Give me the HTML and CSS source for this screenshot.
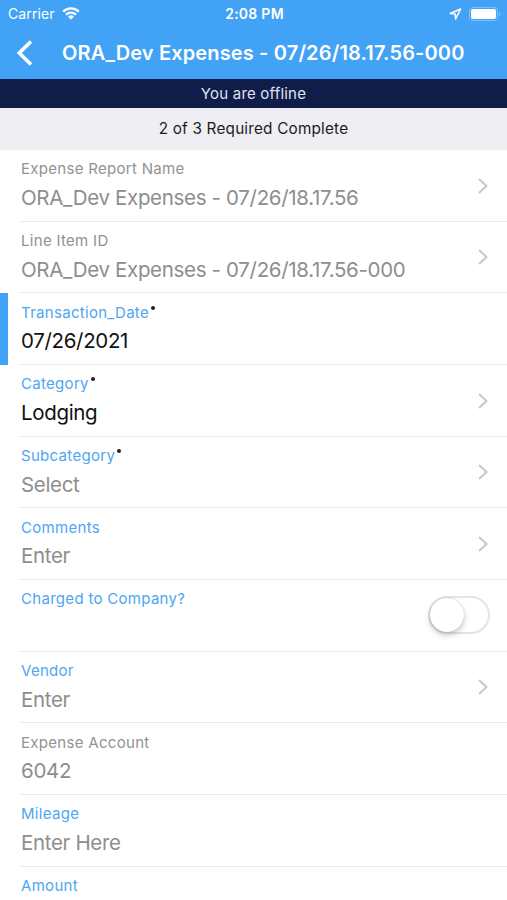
FILE: index.html
```html
<!DOCTYPE html>
<html lang="en">
<head>
<meta charset="utf-8">
<title>Expense</title>
<link rel="stylesheet" href="styles.css">
</head>
<body>
<svg class="sprite" aria-hidden="true"><symbol id="chev" viewBox="0 0 12 18"><path d="M2 2l7.500 7L2 16" fill="none" stroke="currentColor" stroke-width="2"/></symbol></svg>
<div class="screen">
  <header class="top">
    <div class="status">
      <div class="carrier"><span>Carrier</span>
        <svg class="wifi" viewBox="0 0 18 13"><g fill="none" stroke="#fff" stroke-width="2.2"><path d="M1.2 4.6a11 11 0 0 1 15.600 0"/><path d="M4 7.700a7 7 0 0 1 10 0"/></g><path d="M9 12.600L6 9.700a4.300 4.300 0 0 1 6 0z" fill="#fff"/></svg>
      </div>
      <div class="time">2:08 PM</div>
      <div class="right">
        <svg class="loc" viewBox="0 0 13 12"><path d="M11.700 1L1.200 5.500l5 .4.4 5z" fill="none" stroke="#fff" stroke-width="1.500" stroke-linejoin="round"/></svg>
        <svg class="battery" viewBox="0 0 32 14"><rect x=".5" y=".5" width="28" height="13" rx="3.500" fill="none" stroke="#7fc0f9"/><rect x="2" y="2" width="25" height="10" rx="2" fill="#fff"/><path d="M30 5v4q1.500-.6 1.500-2t-1.500-2z" fill="#7fc0f9"/></svg>
      </div>
    </div>
    <div class="nav">
      <svg class="back" viewBox="0 0 18 28"><path d="M16 2.500L4.300 14 16 25.500" fill="none" stroke="#fff" stroke-width="3.600"/></svg>
      <h1>ORA_Dev Expenses - 07/26/18.17.56-000</h1>
    </div>
  </header>
  <div class="offline">You are offline</div>
  <div class="progress">2 of 3 Required Complete</div>
  <main>
    <div class="row"><div class="cell"><div><div class="label">Expense Report Name</div><div class="value">ORA_Dev Expenses - 07/26/18.17.56</div></div><svg class="chev"><use href="#chev"/></svg></div></div>
    <div class="row"><div class="cell"><div><div class="label">Line Item ID</div><div class="value">ORA_Dev Expenses - 07/26/18.17.56-000</div></div><svg class="chev"><use href="#chev"/></svg></div></div>
    <div class="row active"><div class="cell"><div><div class="label edit">Transaction_Date<i></i></div><div class="value filled">07/26/2021</div></div></div></div>
    <div class="row"><div class="cell"><div><div class="label edit">Category<i></i></div><div class="value filled">Lodging</div></div><svg class="chev"><use href="#chev"/></svg></div></div>
    <div class="row"><div class="cell"><div><div class="label edit">Subcategory<i></i></div><div class="value">Select</div></div><svg class="chev"><use href="#chev"/></svg></div></div>
    <div class="row"><div class="cell"><div><div class="label edit">Comments</div><div class="value">Enter</div></div><svg class="chev"><use href="#chev"/></svg></div></div>
    <div class="row"><div class="cell"><div><div class="label edit">Charged to Company?</div></div><div class="toggle"><span></span></div></div></div>
    <div class="row"><div class="cell"><div><div class="label edit">Vendor</div><div class="value">Enter</div></div><svg class="chev"><use href="#chev"/></svg></div></div>
    <div class="row"><div class="cell"><div><div class="label">Expense Account</div><div class="value">6042</div></div></div></div>
    <div class="row"><div class="cell"><div><div class="label edit">Mileage</div><div class="value">Enter Here</div></div></div></div>
    <div class="row"><div class="cell"><div><div class="label edit">Amount</div></div></div></div>
  </main>
</div>
</body>
</html>
```
FILE: styles.css
```css
* { box-sizing: border-box; }
body { margin: 0; background: #fff; font-family: Inter, "Liberation Sans", sans-serif; }
.sprite { position: absolute; width: 0; height: 0; }
.screen { width: 507px; height: 900px; overflow: hidden; }
.top { height: 79px; background: #42a3f6; color: #fff; }
.status { height: 27px; display: grid; grid-template-columns: 1fr auto 1fr; align-items: center; padding: 0 6px 0 8px; font-size: 14px; line-height: 27px; }
.carrier { display: flex; align-items: center; gap: 7px; letter-spacing: .1px; }
.wifi { width: 18px; height: 13px; }
.time { font-weight: 600; letter-spacing: .25px; }
.right { display: flex; justify-content: flex-end; align-items: center; gap: 7px; }
.loc { width: 13px; height: 12px; }
.battery { width: 32px; height: 14px; }
.nav { height: 52px; display: flex; align-items: center; padding-left: 15px; }
.back { width: 18px; height: 28px; margin-right: 29px; }
h1 { margin: 0; font-size: 20px; font-weight: 600; line-height: 52px; white-space: nowrap; letter-spacing: .15px; }
.offline { height: 29px; background: #111d49; color: #dfe3ee; text-align: center; font-size: 15px; line-height: 29px; letter-spacing: .2px; }
.progress { height: 42px; background: #efeef3; color: #1c1c1e; text-align: center; font-size: 15.300px; line-height: 42px; letter-spacing: .2px; }
.row { height: 71.67px; padding-left: 20px; border-left: 0 solid #42a3f6; }
.active { border-left-width: 8px; padding-left: 12px; }
.cell { height: 100%; display: flex; justify-content: space-between; border-bottom: 1.500px solid #ebebeb; padding: 9.400px 18px 0 1px; }
.label { font-size: 15px; line-height: 20px; color: #929292; white-space: nowrap; display: flex; letter-spacing: .3px; }
.edit { color: #4ea6f2; }
.label i { width: 4px; height: 4px; border-radius: 50%; background: #222; margin: 3px 0 0 2px; }
.value { font-size: 20.500px; line-height: 28px; margin-top: 4.600px; color: #8e8e8e; white-space: nowrap; letter-spacing: -.33px; }
.filled { color: #111; }
.chev { width: 12px; height: 18px; margin-top: 17.400px; color: #c7c7cb; }
.toggle { width: 62px; height: 38px; margin: 7px -1px 0 0; border: 2px solid #e5e5e5; border-radius: 19px; }
.toggle span { display: block; width: 34px; height: 34px; border-radius: 50%; background: #fff; box-shadow: 0 3px 6px rgba(0,0,0,.22), 0 0 1px rgba(0,0,0,.25); }
```
